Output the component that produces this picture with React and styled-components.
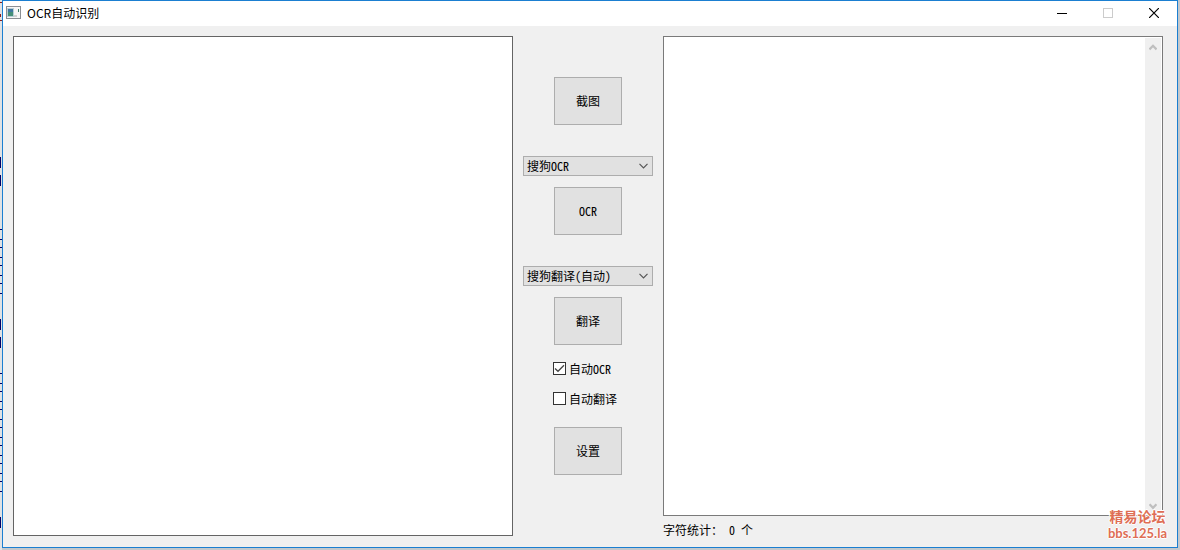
import React, { useState } from 'react'
import styled, { createGlobalStyle } from 'styled-components'

const font = {
    ui: '"Noto Sans CJK SC", sans-serif',
    mono: '"Noto Sans Mono CJK SC", "Noto Sans CJK SC", monospace'
}

const color = {
    accent: '#1b7fd1',
    face: '#f0f0f0',
    button: '#e1e1e1',
    buttonBorder: '#adadad',
    navy: '#000066'
}

const GlobalStyle = createGlobalStyle`
    * {
        box-sizing: border-box;
    }

    body {
        margin: 0;
        background-color: #c4c8cc;
    }
`

const Desktop = styled.div`
    display: flex;
    height: 100vh;
    padding: 0 2px 2px 0;
    overflow: hidden;
`

const Sliver = styled.svg`
    flex: none;
    width: 2px;
    height: 550px;
    background-color: #e0e2e4;
`

const Window = styled.main`
    position: relative;
    display: flex;
    flex: 1;
    flex-direction: column;
    min-width: 0;

    border: 1px solid ${color.accent};
    background-color: ${color.face};
`

const TitleBar = styled.header`
    display: flex;
    flex: none;
    align-items: center;
    height: 25px;
    padding: 0 0 1px 3px;
    background-color: #fff;
`

const Title = styled.h1`
    flex: 1;
    margin: 0 0 0 6px;

    font-family: ${font.ui};
    font-size: 12px;
    font-weight: 400;
    line-height: 22px;
    color: #000;
`

const TitleButton = styled.button`
    display: flex;
    align-items: center;
    justify-content: center;
    width: 46px;
    height: 24px;
    padding: 0;

    border: 0;
    background: none;
    color: ${props => props.disabled ? '#ccc' : '#000'};
`

const Body = styled.div`
    display: grid;
    flex: 1;
    grid-template-columns: 1fr 150px 1fr;
    min-height: 0;
    padding: 10px 14px 11px 10px;
`

const Preview = styled.section`
    min-width: 0;
    border: 1px solid #646464;
    background-color: #fff;
`

const Controls = styled.section`
    display: flex;
    flex-direction: column;
    align-items: center;
    padding-top: 41px;
`

const Group = styled.div`
    display: flex;
    flex-direction: column;
    align-items: center;
    gap: 11px;
    margin-bottom: ${props => props.$tight ? 8 : 31}px;
`

const Button = styled.button`
    width: 68px;
    height: 48px;
    padding: 0 0 2px;

    border: 1px solid ${color.buttonBorder};
    background-color: ${color.button};

    font-family: ${font.mono};
    font-size: 12px;
    color: #000;
`

const SelectBox = styled.div`
    display: grid;
    align-items: center;
    width: 130px;
    height: 20px;

    border: 1px solid ${color.buttonBorder};
    background-color: ${color.button};

    > * {
        grid-area: 1 / 1;
    }

    svg {
        justify-self: end;
        margin-right: 4px;
        pointer-events: none;
    }
`

const Select = styled.select`
    width: 100%;
    height: 18px;
    padding: 0 20px 0 3px;

    appearance: none;
    border: 0;
    border-radius: 0;
    background: none;

    font-family: ${font.mono};
    font-size: 12px;
    line-height: 18px;
    color: #000;
`

const Checks = styled.div`
    width: 70px;
    margin-bottom: 14px;
`

const CheckLabel = styled.label`
    display: flex;
    align-items: center;
    gap: 3px;
    height: 30px;

    font-family: ${font.mono};
    font-size: 12px;
    white-space: nowrap;
    color: #000;
`

const CheckBox = styled.span`
    display: grid;
    flex: none;
    width: 13px;
    height: 13px;

    > * {
        grid-area: 1 / 1;
    }

    svg {
        pointer-events: none;
    }
`

const CheckInput = styled.input`
    width: 13px;
    height: 13px;
    margin: 0;

    appearance: none;
    border: 1px solid #333;
    background-color: #fff;
`

const Output = styled.section`
    display: flex;
    flex-direction: column;
    min-width: 0;
`

const OutputBox = styled.div`
    display: flex;
    flex: 1;
    min-height: 0;
    padding: 1px;
    border: 1px solid #7a7a7a;
    background-color: #fff;
`

const Textarea = styled.textarea`
    flex: 1;
    min-width: 0;
    padding: 2px;

    border: 0;
    outline: 0;
    resize: none;

    font-family: ${font.mono};
    font-size: 12px;
`

const ScrollBar = styled.div`
    display: flex;
    flex: none;
    flex-direction: column;
    align-items: center;
    justify-content: space-between;
    width: 16px;
    padding: 6px 0 4px;
    background-color: ${color.face};
`

const Status = styled.p`
    flex: none;
    height: 20px;
    margin: 0;

    font-family: ${font.mono};
    font-size: 12px;
    line-height: 28px;
    white-space: pre;
    color: #000;
`

const Watermark = styled.div`
    position: absolute;
    right: 10px;
    bottom: 6px;

    font-family: Lato, ${font.ui};
    font-size: 13px;
    font-weight: 700;
    line-height: 16px;
    text-align: center;
    color: #de6e55;
    text-shadow: 1px 0 #fff, -1px 0 #fff, 0 1px #fff, 0 -1px #fff;
    pointer-events: none;
`

const WatermarkName = styled.div`
    font-family: "Liberation Sans", ${font.ui};
    font-size: 14px;
`

// Edges of the window behind, visible left of the frame
const lines = [
    229, 239, 247, 257, 265, 275, 283, 293,
    373, 383, 391, 401, 409, 419, 427, 437,
    445, 455, 463, 473, 481, 491
]

const blocks = [157, 175, 319, 337, 517]

const engines = ['搜狗OCR', '百度OCR', '腾讯OCR']
const translators = ['搜狗翻译(自动)', '百度翻译(自动)', '谷歌翻译(自动)']

function Backdrop() {
    return (
        <Sliver viewBox="0 0 2 550" shapeRendering="crispEdges" aria-hidden="true">
            <path d="M0 2h2v1H0zM0 14h1v3H0zM0 20h2v1H0z" fill="#8a2020" />
            {lines.map(y => (
                <rect key={y} x="0" y={y} width="2" height="1" fill={color.navy} />
            ))}
            {blocks.map(y => (
                <rect key={y} x="0" y={y} width="1" height="11" fill={color.navy} />
            ))}
        </Sliver>
    )
}

function AppIcon() {
    return (
        <svg width="15" height="14" viewBox="0 0 15 14" shapeRendering="crispEdges" aria-hidden="true">
            <rect width="15" height="13" fill="#8b8f94" />
            <rect x="1" y="1" width="13" height="11" fill="#f6f6f6" />
            <rect x="1" y="2" width="7" height="9" fill="#b9cfd6" />
            <rect x="2" y="3" width="5" height="7" fill="#3f77a0" />
            <rect x="2" y="6" width="5" height="4" fill="#458f78" />
            <rect x="8" y="9" width="3" height="2" fill="#d0d0d0" />
            <rect x="12" y="3" width="1" height="3" fill="#3d7f69" />
        </svg>
    )
}

function Chevron() {
    return (
        <svg width="9" height="6" viewBox="0 0 9 6" aria-hidden="true">
            <path d="M.5.8 4.5 4.8 8.5.8" fill="none" stroke="#555" strokeWidth="1.2" />
        </svg>
    )
}

function ScrollArrow({ down }) {
    return (
        <svg width="8" height="7" viewBox="0 0 8 7" aria-hidden="true">
            <path
                d={down ? 'M.5 1.2 4 4.8 7.5 1.2' : 'M.5 5.4 4 1.8 7.5 5.4'}
                fill="none"
                stroke="#bfbfbf"
                strokeWidth="2.2" />
        </svg>
    )
}

function Dropdown({ label, options }) {
    return (
        <SelectBox>
            <Select aria-label={label}>
                {options.map(option => <option key={option}>{option}</option>)}
            </Select>
            <Chevron />
        </SelectBox>
    )
}

function Check({ initial, children }) {
    const [checked, setChecked] = useState(initial)

    return (
        <CheckLabel>
            <CheckBox>
                <CheckInput
                    type="checkbox"
                    checked={checked}
                    onChange={e => setChecked(e.target.checked)} />
                {checked && (
                    <svg width="13" height="13" viewBox="0 0 13 13" aria-hidden="true">
                        <path d="M2 6.5 5 9.3 11 3.3" fill="none" stroke="#444" strokeWidth="1.3" />
                    </svg>
                )}
            </CheckBox>
            {children}
        </CheckLabel>
    )
}

function App() {
    const [text, setText] = useState('')

    return (
        <Desktop>
            <GlobalStyle />
            <Backdrop />
            <Window>
                <TitleBar>
                    <AppIcon />
                    <Title>OCR自动识别</Title>
                    <TitleButton aria-label="最小化">
                        <svg width="10" height="10" viewBox="0 0 10 10" shapeRendering="crispEdges">
                            <path d="M0 5h10v1H0z" fill="currentColor" />
                        </svg>
                    </TitleButton>
                    <TitleButton aria-label="最大化" disabled>
                        <svg width="10" height="10" viewBox="0 0 10 10" shapeRendering="crispEdges">
                            <path d="M.5.5h9v9h-9z" fill="none" stroke="currentColor" />
                        </svg>
                    </TitleButton>
                    <TitleButton aria-label="关闭">
                        <svg width="10" height="10" viewBox="0 0 10 10">
                            <path d="M0 0 10 10M10 0 0 10" stroke="currentColor" strokeWidth="1.2" />
                        </svg>
                    </TitleButton>
                </TitleBar>
                <Body>
                    <Preview aria-label="图片预览" />
                    <Controls>
                        <Group>
                            <Button>截图</Button>
                        </Group>
                        <Group>
                            <Dropdown label="识别引擎" options={engines} />
                            <Button>OCR</Button>
                        </Group>
                        <Group $tight>
                            <Dropdown label="翻译引擎" options={translators} />
                            <Button>翻译</Button>
                        </Group>
                        <Checks>
                            <Check initial={true}>自动OCR</Check>
                            <Check initial={false}>自动翻译</Check>
                        </Checks>
                        <Button>设置</Button>
                    </Controls>
                    <Output>
                        <OutputBox>
                            <Textarea
                                aria-label="识别结果"
                                value={text}
                                onChange={e => setText(e.target.value)} />
                            <ScrollBar>
                                <ScrollArrow />
                                <ScrollArrow down />
                            </ScrollBar>
                        </OutputBox>
                        <Status>字符统计： {text.length} 个</Status>
                    </Output>
                </Body>
                <Watermark>
                    <WatermarkName>精易论坛</WatermarkName>
                    bbs.125.la
                </Watermark>
            </Window>
        </Desktop>
    )
}

export default App
